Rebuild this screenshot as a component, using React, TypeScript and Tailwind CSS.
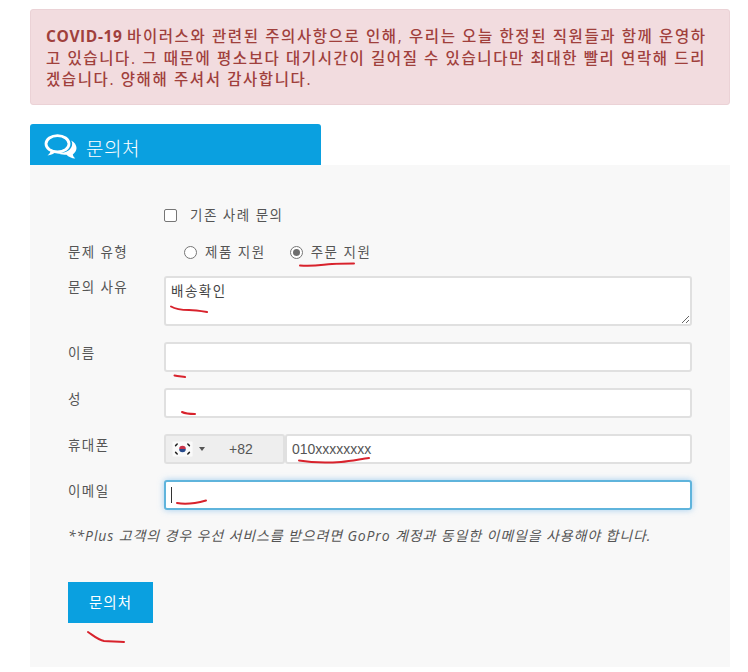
const sans = "font-['Open_Sans','Noto_Sans_CJK_KR',sans-serif]";

function Flag() {
  return (
    <svg width="21" height="16" viewBox="0 0 21 16" className="block">
      <rect width="21" height="16" fill="#fafafa" stroke="#e4e4e4" strokeWidth="0.5" />
      <path d="M7.2 8a3.3 3.3 0 0 1 6.6 0z" fill="#c8324a" />
      <path d="M7.2 8a3.3 3.3 0 0 0 6.6 0z" fill="#264a8c" />
      <g stroke="#222" strokeWidth="1.5" strokeLinecap="round">
        <path d="M3.6 4.6l1.6-1.6M15.8 3l1.6 1.6M3.6 11.4l1.6 1.6M15.8 13l1.6-1.6" />
      </g>
    </svg>
  );
}

function CommentsIcon() {
  return (
    <svg width="33" height="25" viewBox="0 0 33 25" fill="none" className="block shrink-0">
      <ellipse cx="13.500" cy="9.800" rx="11.500" ry="8.200" stroke="white" strokeWidth="2.800" />
      <path d="M7 15.500c-.3 2.500-1.500 4.500-3.500 6 3.200-.3 6.500-1.600 9-4z" fill="white" />
      <path d="M27.200 6.500c3.300 1.800 5.300 4.600 5.300 7.600 0 2.600-1.400 4.800-3.700 6.400.3 1.500 1.100 2.900 2.500 4-3.700-.3-6.800-1.600-8.800-3.800-3.200.4-6.800-.2-9.300-1.600 7.500.6 14.800-2.600 15-9.300.1-1.100-.4-2.200-1-3.300z" fill="white" />
    </svg>
  );
}

function Row({ label, children, className }: { label: string; children: React.ReactNode; className?: string }) {
  return (
    <div className={`flex ${className ?? ""}`}>
      <label className="w-[134px] shrink-0 pl-[38px] pt-[1px] text-[13.5px] leading-[20px] text-[#555] tracking-[1.4px] whitespace-nowrap">
        {label}
      </label>
      <div className="flex-1">{children}</div>
    </div>
  );
}

const inputCls =
  "block w-[528px] h-[30px] bg-white border-2 border-[#e0e0e0] rounded-[3px] outline-none";

export default function App() {
  return (
    <div className={`relative w-[748px] h-[672px] bg-white overflow-hidden ${sans}`}>
      <div className="pt-[9px] pl-[30px] w-[730px]">
        <div className="h-[96px] bg-[#f2dcdf] border border-[#ebd2d6] rounded-[3px] pl-[15px] pr-[15px] pt-[16px] text-[15.5px] leading-[21.5px] text-[#a0403c] font-medium tracking-[1.6px] [word-break:break-all]">
          <span className="font-bold tracking-[0.6px]">COVID-19 </span>바이러스와 관련된 주의사항으로 인해, 우리는 오늘 한정된 직원들과 함께 운영하고 있습니다. 그 때문에 평소보다 대기시간이 길어질 수 있습니다만 최대한 빨리 연락해 드리겠습니다. 양해해 주셔서 감사합니다.
        </div>

        <div className="mt-[19px] w-[291px] h-[41px] bg-[#0aa0e0] rounded-t-[3px] flex items-center pl-[14px] pt-[4px] text-white">
          <CommentsIcon />
          <span className="ml-[9px] mt-[6px] text-[19px] font-light tracking-[0.5px]">문의처</span>
        </div>

        <div className="w-[700px] h-[502px] bg-[#f8f8f8] pt-[41px]">
          <div className="flex items-center pl-[134px] h-[18px]">
            <span className="w-[13px] h-[13px] border border-[#767676] rounded-[2px] bg-white" />
            <span className="ml-[13px] text-[13.5px] text-[#555] tracking-[1.5px]">기존 사례 문의</span>
          </div>

          <Row label="문제 유형" className="mt-[17px] h-[26px]">
            <div className="flex items-center h-[20px] mt-[1px] pl-[20px] text-[13.5px] text-[#555] tracking-[1.5px]">
              <span className="w-[13px] h-[13px] rounded-full border border-[#767676] bg-white" />
              <span className="ml-[8px]">제품 지원</span>
              <span className="ml-[24px] w-[13px] h-[13px] rounded-full border border-[#767676] bg-white flex items-center justify-center">
                <span className="w-[7px] h-[7px] rounded-full bg-[#6e6e6e]" />
              </span>
              <span className="ml-[8px]">주문 지원</span>
            </div>
          </Row>

          <Row label="문의 사유" className="mt-[9px]">
            <textarea
              readOnly
              value="배송확인"
              className="block w-[528px] h-[50px] bg-white border-2 border-[#e0e0e0] rounded-[3px] outline-none px-[5px] py-[3px] text-[13.5px] leading-[20px] text-[#444] tracking-[1.5px] resize-y"
            />
          </Row>

          <Row label="이름" className="mt-[16px]">
            <input readOnly className={inputCls} />
          </Row>

          <Row label="성" className="mt-[16px]">
            <input readOnly className={inputCls} />
          </Row>

          <Row label="휴대폰" className="mt-[16px]">
            <div className="flex w-[528px] h-[30px]">
              <div className="w-[121px] h-full bg-[#eeeeee] border-2 border-[#e0e0e0] rounded-[3px] flex items-center pl-[6px] shrink-0">
                <Flag />
                <span className="ml-[6px] w-0 h-0 border-x-[3px] border-x-transparent border-t-[4px] border-t-[#555]" />
                <span className="ml-[24px] font-['Liberation_Sans',sans-serif] text-[14px] text-[#555]">+82</span>
              </div>
              <input
                readOnly
                value="010xxxxxxxx"
                className="flex-1 min-w-0 h-full bg-white border-2 border-[#e0e0e0] rounded-[3px] outline-none px-[5px] font-['Liberation_Sans',sans-serif] text-[14px] text-[#555]"
              />
            </div>
          </Row>

          <Row label="이메일" className="mt-[16px]">
            <div className="relative w-[528px]">
              <input
                readOnly
                className="block w-[528px] h-[30px] bg-white border-2 border-[#5fb4dc] rounded-[3px] outline-none shadow-[0_0_6px_rgba(102,175,233,0.6)]"
              />
              <span className="absolute left-[7px] top-[7px] w-px h-[16px] bg-[#333]" />
            </div>
          </Row>

          <p className="mt-[16px] pl-[38px] text-[14px] leading-[20px] italic text-[#555] tracking-[0.87px] whitespace-nowrap">
            **Plus 고객의 경우 우선 서비스를 받으려면 GoPro 계정과 동일한 이메일을 사용해야 합니다.
          </p>

          <button className="block mt-[36px] ml-[38px] w-[85px] h-[41px] bg-[#0aa0e0] text-white text-[14.5px] tracking-[1px]">
            문의처
          </button>
        </div>
      </div>

      <svg className="absolute inset-0 pointer-events-none" width="748" height="672" viewBox="0 0 748 672" fill="none">
        <g stroke="#d8222c" strokeWidth="2" strokeLinecap="round" strokeLinejoin="round">
          <path d="M300 265.500c14 1 20-.5 32-1.500 8-.5 16-.5 22-.5" />
          <path d="M171 306.500c5 3 10 3.500 18 3.500 6 0 12 1 18 2" />
          <path d="M174.500 375.500c3 .5 7 1 10.500 1.500" />
          <path d="M182 412c3 1.500 8 2 13 2" />
          <path d="M299 460.500c14 2.500 28 2.500 42 1.500 10-.8 20-3 28-4" />
          <path d="M177 503c8 1.500 18 .5 29-2.500" />
          <path d="M88 632c6 4 10 8 16 9 7 .5 13 .5 20 1" />
        </g>
      </svg>
    </div>
  );
}
